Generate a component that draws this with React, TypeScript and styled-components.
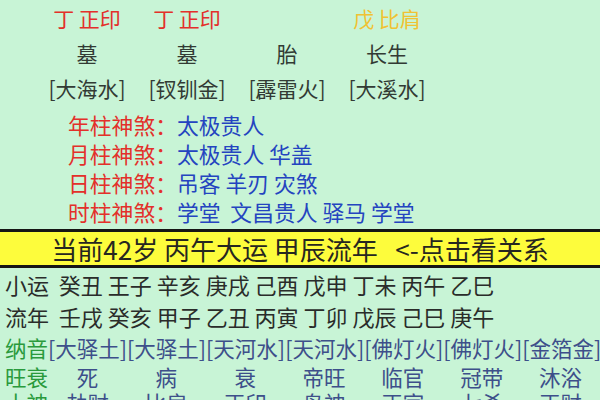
import React from "react";
import styled, { createGlobalStyle } from "styled-components";

const Global = createGlobalStyle`
  html, body {
    margin: 0;
    padding: 0;
    background: #c8f4d6;
  }
  body {
    font-family: "Noto Sans CJK SC", "Noto Sans", sans-serif;
    width: 600px;
    height: 400px;
    overflow: hidden;
  }
`;

const Page = styled.div`
  width: 600px;
  height: 400px;
  overflow: hidden;
  background: #c8f4d6;
  display: flex;
  flex-direction: column;
`;

const PillarGrid = styled.div`
  display: grid;
  grid-template-columns: repeat(4, 100px);
  padding: 1px 0 0 37px;
  font-size: 21px;
  line-height: 35px;
`;

const Cell = styled.div<{ $color?: string }>`
  text-align: center;
  white-space: pre;
  color: ${(p) => p.$color ?? "#323a34"};
`;

const Shensha = styled.div`
  padding: 4px 0 0 68px;
  font-size: 21.8px;
  line-height: 29px;
`;

const ShenLine = styled.div`
  display: flex;
  white-space: pre;
`;

const ShenLabel = styled.span`
  color: #e3302a;
`;

const ShenValue = styled.span`
  color: #2444c0;
`;

const Banner = styled.div`
  margin-top: 2.5px;
  height: 33px;
  border-top: 3px solid #151515;
  border-bottom: 3px solid #151515;
  background: #fdfc3c;
  display: flex;
  align-items: center;
  justify-content: center;
  font-size: 26px;
  color: #262620;
  white-space: pre;
  cursor: pointer;
`;

const CycleLine = styled.div`
  padding-left: 5px;
  font-size: 22px;
  line-height: 32px;
  color: #2a2c2a;
  white-space: pre;
`;

const InfoRow = styled.div<{ $lh: number }>`
  display: grid;
  grid-template-columns: 43px repeat(7, 1fr);
  padding-left: 5px;
  font-size: 21.5px;
  line-height: ${(p) => p.$lh}px;
  white-space: pre;
`;

const InfoLabel = styled.span`
  color: #2a9a3c;
`;

const InfoCell = styled.span<{ $center?: boolean }>`
  color: #3d4f8a;
  text-align: ${(p) => (p.$center ? "center" : "left")};
`;

const pillarRows: { text: string; color?: string }[][] = [
  [
    { text: "丁 正印", color: "#e3302a" },
    { text: "丁 正印", color: "#e3302a" },
    { text: "" },
    { text: "戊 比肩", color: "#f0c232" },
  ],
  [{ text: "墓" }, { text: "墓" }, { text: "胎" }, { text: "长生" }],
  [
    { text: "[大海水]" },
    { text: "[钗钏金]" },
    { text: "[霹雷火]" },
    { text: "[大溪水]" },
  ],
];

const shensha = [
  ["年柱神煞：", "太极贵人"],
  ["月柱神煞：", "太极贵人 华盖"],
  ["日柱神煞：", "吊客 羊刃 灾煞"],
  ["时柱神煞：", "学堂  文昌贵人 驿马 学堂"],
];

const nayin = ["大驿土", "大驿土", "天河水", "天河水", "佛灯火", "佛灯火", "金箔金"];
const wangshuai = ["死", "病", "衰", "帝旺", "临官", "冠带", "沐浴"];
const shishen = ["劫财", "比肩", "正印", "枭神", "正官", "七杀", "正财"];

export default function App() {
  return (
    <Page>
      <Global />
      <PillarGrid>
        {pillarRows.map((row, r) =>
          row.map((c, i) => (
            <Cell key={`${r}-${i}`} $color={c.color}>
              {c.text}
            </Cell>
          ))
        )}
      </PillarGrid>
      <Shensha>
        {shensha.map(([l, v]) => (
          <ShenLine key={l}>
            <ShenLabel>{l}</ShenLabel>
            <ShenValue>{v}</ShenValue>
          </ShenLine>
        ))}
      </Shensha>
      <Banner>{"当前42岁 丙午大运 甲辰流年   <-点击看关系"}</Banner>
      <CycleLine>{"小运  癸丑 王子 辛亥 庚戌 己酉 戊申 丁未 丙午 乙巳"}</CycleLine>
      <CycleLine>{"流年  壬戌 癸亥 甲子 乙丑 丙寅 丁卯 戊辰 己巳 庚午"}</CycleLine>
      <InfoRow $lh={32}>
        <InfoLabel>纳音</InfoLabel>
        {nayin.map((n, i) => (
          <InfoCell key={i}>{`[${n}]`}</InfoCell>
        ))}
      </InfoRow>
      <InfoRow $lh={26}>
        <InfoLabel>旺衰</InfoLabel>
        {wangshuai.map((n, i) => (
          <InfoCell key={i} $center>
            {n}
          </InfoCell>
        ))}
      </InfoRow>
      <InfoRow $lh={26}>
        <InfoLabel>十神</InfoLabel>
        {shishen.map((n, i) => (
          <InfoCell key={i} $center>
            {n}
          </InfoCell>
        ))}
      </InfoRow>
    </Page>
  );
}
